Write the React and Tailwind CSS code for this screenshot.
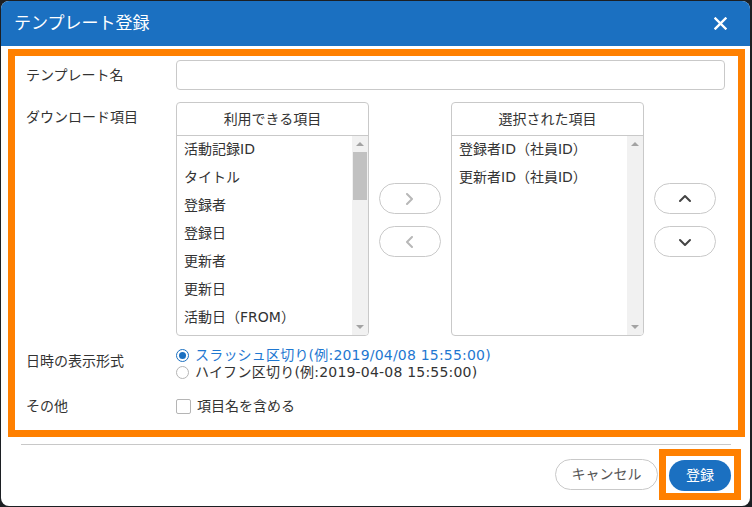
import React from 'react';

const FONT = { fontFamily: '"DejaVu Sans", "Noto Sans CJK JP", sans-serif' };

const AVAILABLE = ['活動記録ID', 'タイトル', '登録者', '登録日', '更新者', '更新日', '活動日（FROM）'];
const SELECTED = ['登録者ID（社員ID）', '更新者ID（社員ID）'];

function Chevron({ dir, className }) {
  const pts = {
    right: '3,1 8,6 3,11',
    left: '8,1 3,6 8,11',
    up: '1,8 6,3 11,8',
    down: '1,4 6,9 11,4',
  }[dir];
  return (
    <svg width="12" height="12" viewBox="0 0 12 12" className={className}>
      <polyline points={pts} fill="none" stroke="currentColor" strokeWidth="2" strokeLinecap="round" strokeLinejoin="round" />
    </svg>
  );
}

function Scrollbar({ thumb }) {
  return (
    <div className="w-[16px] h-full bg-[#f1f1f1] flex flex-col items-center">
      <div className="h-[16px] flex items-center justify-center">
        <div className="w-0 h-0 border-l-[4px] border-r-[4px] border-b-[4px] border-l-transparent border-r-transparent border-b-[#a3a3a3]" />
      </div>
      <div className="flex-1 w-full px-[1px]">
        {thumb && <div className="h-[48px] w-full bg-[#c1c1c1]" />}
      </div>
      <div className="h-[16px] flex items-center justify-center">
        <div className="w-0 h-0 border-l-[4px] border-r-[4px] border-t-[4px] border-l-transparent border-r-transparent border-t-[#a3a3a3]" />
      </div>
    </div>
  );
}

function ListBox({ title, items, thumb }) {
  return (
    <div className="w-[193px] h-[234px] border border-[#c9c9c9] rounded-[4px] flex flex-col overflow-hidden">
      <div className="h-[33px] shrink-0 border-b border-[#c9c9c9] flex items-center justify-center text-[14px] text-[#333]">
        {title}
      </div>
      <div className="flex-1 flex min-h-0">
        <div className="flex-1 pl-[7px] -mt-px overflow-hidden">
          {items.map((it) => (
            <div key={it} className="h-[28px] leading-[28px] text-[14px] text-[#333] whitespace-nowrap">
              {it}
            </div>
          ))}
        </div>
        <Scrollbar thumb={thumb} />
      </div>
    </div>
  );
}

function PillButton({ dir, dark }) {
  return (
    <button className="w-[62px] h-[31px] rounded-full border border-[#c9c9c9] bg-white flex items-center justify-center">
      <Chevron dir={dir} className={dark ? 'text-[#444]' : 'text-[#b8b8b8]'} />
    </button>
  );
}

export default function App() {
  return (
    <div className="w-[752px] h-[507px] bg-[#1c1f23] p-px" style={FONT}>
      <div className="w-[749px] h-[505px] bg-white rounded-[8px] overflow-hidden flex flex-col">
        <div className="h-[45px] shrink-0 bg-[#1b70c1] flex items-center justify-between pl-[13px] pr-[23px]">
          <span className="text-white text-[17px]">テンプレート登録</span>
          <svg width="13" height="13" viewBox="0 0 13 13">
            <path d="M1.5 1.5 L11.5 11.5 M11.5 1.5 L1.5 11.5" stroke="white" strokeWidth="2.4" strokeLinecap="square" />
          </svg>
        </div>

        <div className="mt-[3px] ml-[7px] w-[737px] h-[388px] border-[7px] border-[#ff8000] text-[14px] text-[#333]">
          <div className="pt-[4px] flex items-center">
            <div className="w-[161px] pl-[11px] pt-px">テンプレート名</div>
            <input className="w-[549px] h-[30px] border border-[#c9c9c9] rounded-[4px] outline-none px-2" />
          </div>

          <div className="mt-[12px] flex">
            <div className="w-[161px] pl-[11px] pt-[5px] leading-5">ダウンロード項目</div>
            <ListBox title="利用できる項目" items={AVAILABLE} thumb />
            <div className="ml-[10px] mr-[10px] pt-[81px] flex flex-col gap-[12px]">
              <PillButton dir="right" />
              <PillButton dir="left" />
            </div>
            <ListBox title="選択された項目" items={SELECTED} />
            <div className="ml-[10px] pt-[81px] flex flex-col gap-[12px]">
              <PillButton dir="up" dark />
              <PillButton dir="down" dark />
            </div>
          </div>

          <div className="mt-[11px] flex items-start">
            <div className="w-[161px] pl-[11px] pt-[4px] leading-5">日時の表示形式</div>
            <div className="flex flex-col tracking-[0.2px]">
              <label className="flex items-center h-[17px] leading-[17px] text-[#1f78d1]">
                <span className="w-[13px] h-[13px] rounded-full border border-[#1b70c1] flex items-center justify-center mr-[6px]">
                  <span className="w-[7px] h-[7px] rounded-full bg-[#1b70c1]" />
                </span>
                スラッシュ区切り(例:2019/04/08 15:55:00)
              </label>
              <label className="flex items-center h-[17px] leading-[17px]">
                <span className="w-[13px] h-[13px] rounded-full border border-[#b5b5b5] mr-[6px]" />
                ハイフン区切り(例:2019-04-08 15:55:00)
              </label>
            </div>
          </div>

          <div className="mt-[15px] flex items-center">
            <div className="w-[161px] pl-[11px]">その他</div>
            <label className="flex items-center">
              <span className="w-[15px] h-[15px] border border-[#b5b5b5] rounded-[2px] mr-[6px]" />
              項目名を含める
            </label>
          </div>
        </div>

        <div className="mt-[7px] ml-[20px] w-[710px] h-px bg-[#c8c8c8]" />

        <div className="mt-[4px] flex items-center justify-end pr-[9px]">
          <button className="w-[103px] h-[31px] rounded-full border border-[#c9c9c9] bg-white text-[14px] text-[#555] mr-px">
            キャンセル
          </button>
          <div className="border-[7px] border-[#ff8000] pt-[4px] pb-[2px] px-[3px]">
            <button className="w-[62px] h-[31px] rounded-full bg-[#1b70c1] text-white text-[14px]">
              登録
            </button>
          </div>
        </div>
      </div>
    </div>
  );
}
